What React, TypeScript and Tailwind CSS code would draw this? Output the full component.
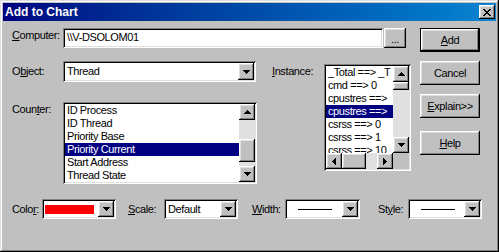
import React from "react";

const raised =
  "bg-[#c0c0c0] shadow-[inset_-1px_-1px_0_#000,inset_1px_1px_0_#fff,inset_-2px_-2px_0_#808080,inset_2px_2px_0_#dfdfdf]";
const sunken =
  "shadow-[inset_1px_1px_0_#808080,inset_-1px_-1px_0_#fff,inset_2px_2px_0_#000,inset_-2px_-2px_0_#dfdfdf]";
const defBtn =
  "bg-[#c0c0c0] shadow-[inset_0_0_0_1px_#000,inset_-2px_-2px_0_#000,inset_2px_2px_0_#fff,inset_-3px_-3px_0_#808080,inset_3px_3px_0_#dfdfdf]";

function Up() {
  return (
    <svg width="7" height="4" viewBox="0 0 7 4" shapeRendering="crispEdges">
      <path d="M3 0h1v1h1v1h1v1h1v1H0V3h1V2h1V1h1z" fill="#000" />
    </svg>
  );
}
function Down() {
  return (
    <svg width="7" height="4" viewBox="0 0 7 4" shapeRendering="crispEdges">
      <path d="M0 0h7v1h-1v1h-1v1h-1v1h-1v-1h-1v-1h-1v-1h-1z" fill="#000" />
    </svg>
  );
}
function Left() {
  return (
    <svg width="4" height="7" viewBox="0 0 4 7" shapeRendering="crispEdges">
      <path d="M3 0h1v7h-1v-1h-1v-1h-1v-1h-1v-1h1v-1h1v-1h1z" fill="#000" />
    </svg>
  );
}
function Right() {
  return (
    <svg width="4" height="7" viewBox="0 0 4 7" shapeRendering="crispEdges">
      <path d="M0 0h1v1h1v1h1v1h1v1h-1v1h-1v1h-1v1h-1z" fill="#000" />
    </svg>
  );
}

function SBtn({ children }: { children: React.ReactNode }) {
  return (
    <div className={`w-4 h-4 shrink-0 flex items-center justify-center ${raised}`}>
      {children}
    </div>
  );
}

function U({ children }: { children: React.ReactNode }) {
  return <span className="underline decoration-1 underline-offset-[1px]">{children}</span>;
}

function Combo({
  w,
  h,
  children,
}: {
  w: string;
  h: string;
  children?: React.ReactNode;
}) {
  return (
    <div className={`${w} ${h} ${sunken} bg-white p-[2px] flex`}>
      <div className="flex-1 flex items-center min-w-0">{children}</div>
      <div className={`w-4 h-full flex items-center justify-center ${raised}`}>
        <Down />
      </div>
    </div>
  );
}

function Button({
  children,
  def,
  className = "",
}: {
  children: React.ReactNode;
  def?: boolean;
  className?: string;
}) {
  return (
    <div
      className={`w-[60px] h-6 flex items-center justify-center ${def ? defBtn : raised} ${className}`}
    >
      {children}
    </div>
  );
}

const counters = [
  "ID Process",
  "ID Thread",
  "Priority Base",
  "Priority Current",
  "Start Address",
  "Thread State",
];

const instances = [
  "_Total ==> _T",
  "cmd ==> 0",
  "cpustres ==>",
  "cpustres ==>",
  "csrss ==> 0",
  "csrss ==> 1",
  "csrss ==> 10",
];

export default function App() {
  return (
    <div className="w-[499px] h-[252px] bg-[#c0c0c0] p-[3px] font-['Liberation_Sans',Arial,sans-serif] text-[11px] leading-[13px] tracking-[-0.4px] text-black shadow-[inset_-1px_-1px_0_#000,inset_1px_1px_0_#dfdfdf,inset_-2px_-2px_0_#808080,inset_2px_2px_0_#fff]">
      {/* Title bar */}
      <div className="h-[18px] flex items-center bg-linear-to-r from-[#000080] to-[#1084d0] pl-[2px] pr-[1px]">
        <span className="text-white font-bold text-[12px] tracking-normal">Add to Chart</span>
        <div className={`ml-auto w-4 h-[14px] flex items-center justify-center ${raised}`}>
          <svg width="8" height="7" viewBox="0 0 8 7" shapeRendering="crispEdges">
            <path
              d="M0 0h2v1h1v1h2V1h1V0h2v1h-1v1h-1v1h-1v1h1v1h1v1h1v1H6V6H5V5H3v1H2v1H0V6h1V5h1V4h1V3H2V2H1V1H0z"
              fill="#000"
            />
          </svg>
        </div>
      </div>

      {/* Body */}
      <div className="flex">
        <div className="w-[417px] pl-[9px] pt-[7px]">
          {/* Computer row */}
          <div className="flex h-5">
            <div className="w-[51px] pt-[1px]">
              <U>C</U>omputer:
            </div>
            <div className={`w-[320px] h-5 ${sunken} bg-white pl-[4px] pt-[3px] whitespace-nowrap`}>
              \\V-DSOLOM01
            </div>
            <div className={`ml-[1px] w-[22px] h-5 flex items-center justify-center ${raised}`}>
              <span className="pt-[2px]">...</span>
            </div>
          </div>

          {/* Object / Counter / Instance */}
          <div className="flex mt-[13px]">
            <div className="w-[245px]">
              <div className="flex h-[21px] items-center">
                <div className="w-[51px]">
                  O<U>b</U>ject:
                </div>
                <Combo w="w-[193px]" h="h-[21px]">
                  <span className="pl-[2px]">Thread</span>
                </Combo>
              </div>
              <div className="flex mt-5">
                <div className="w-[51px] pt-[1px]">
                  Coun<U>t</U>er:
                </div>
                <div className={`w-[194px] h-[82px] ${sunken} bg-white p-[2px] flex`}>
                  <div className="flex-1 flex flex-col">
                    {counters.map((c, i) => (
                      <div
                        key={c}
                        className={`h-[13px] pl-[2px] whitespace-nowrap ${
                          i === 3 ? "bg-[#000080] text-white" : ""
                        }`}
                      >
                        {c}
                      </div>
                    ))}
                  </div>
                  <div className="w-4 flex flex-col">
                    <SBtn>
                      <Up />
                    </SBtn>
                    <div className="h-[19px] bg-[#e0e0e0]" />
                    <div className={`h-[23px] ${raised}`} />
                    <div className="flex-1 bg-[#e0e0e0]" />
                    <SBtn>
                      <Down />
                    </SBtn>
                  </div>
                </div>
              </div>
            </div>

            <div className="ml-[15px] w-[52px] pt-[4px]">
              <U>I</U>nstance:
            </div>
            <div className={`mt-[3px] w-[87px] h-[107px] ${sunken} bg-white p-[2px] flex flex-col`}>
              <div className="flex h-[87px]">
                <div className="flex-1 min-w-0 overflow-hidden flex flex-col">
                  {instances.map((t, i) => (
                    <div
                      key={i}
                      className={`h-[13px] shrink-0 pl-[2px] whitespace-nowrap ${
                        i === 3 ? "bg-[#000080] text-white" : ""
                      }`}
                    >
                      {t}
                    </div>
                  ))}
                </div>
                <div className="w-4 flex flex-col">
                  <SBtn>
                    <Up />
                  </SBtn>
                  <div className={`h-2 ${raised}`} />
                  <div className="flex-1 bg-[#e0e0e0]" />
                  <SBtn>
                    <Down />
                  </SBtn>
                </div>
              </div>
              <div className="flex h-4">
                <div className="flex-1 flex">
                  <SBtn>
                    <Left />
                  </SBtn>
                  <div className={`w-6 h-4 ${raised}`} />
                  <div className="flex-1 bg-[#e0e0e0]" />
                  <SBtn>
                    <Right />
                  </SBtn>
                </div>
                <div className="w-4 bg-[#c0c0c0]" />
              </div>
            </div>
          </div>
        </div>

        {/* Buttons */}
        <div className="w-[60px] pt-[7px] flex flex-col">
          <Button def>
            <U>A</U>dd
          </Button>
          <Button className="mt-[9px]">Cancel</Button>
          <Button className="mt-[9px]">
            <U>E</U>xplain&gt;&gt;
          </Button>
          <Button className="mt-[13px]">
            <U>H</U>elp
          </Button>
        </div>
      </div>

      {/* Bottom row */}
      <div className="flex items-center pl-[9px] mt-[15px] h-5">
        <div className="w-[30px]">
          Colo<U>r</U>:
        </div>
        <Combo w="w-[74px]" h="h-5">
          <div className="ml-[1px] w-[49px] h-[9px] bg-[#ff0000]" />
        </Combo>
        <div className="ml-[12px] w-[36px]">
          <U>S</U>cale:
        </div>
        <Combo w="w-[74px]" h="h-5">
          <span className="pl-[2px]">Default</span>
        </Combo>
        <div className="ml-[14px] w-[33px]">
          <U>W</U>idth:
        </div>
        <Combo w="w-[75px]" h="h-5">
          <div className="ml-[11px] w-[34px] h-px bg-black" />
        </Combo>
        <div className="ml-[18px] w-[30px]">
          St<U>y</U>le:
        </div>
        <Combo w="w-[74px]" h="h-5">
          <div className="ml-[11px] w-[34px] h-px bg-black" />
        </Combo>
      </div>
    </div>
  );
}
